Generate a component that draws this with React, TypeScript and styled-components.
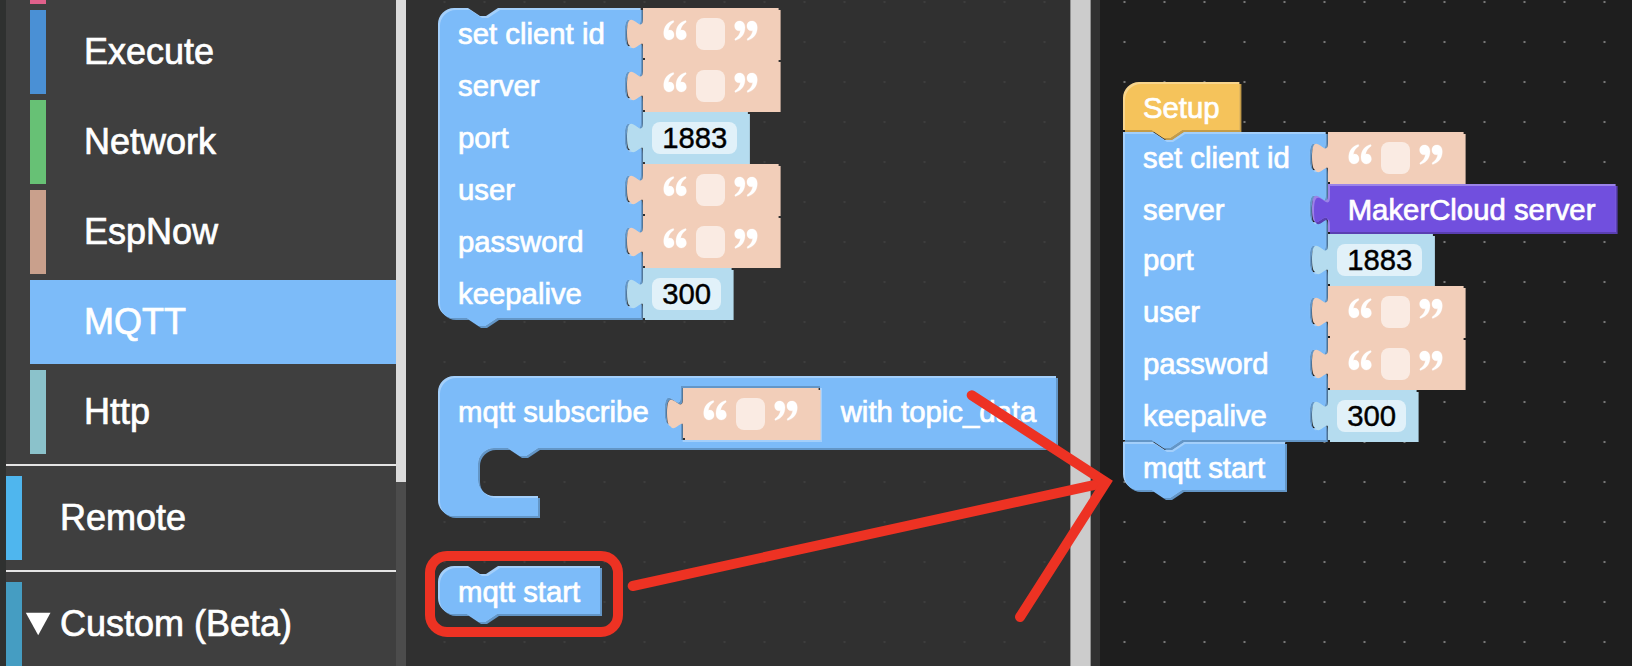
import React from 'react';
import styled, { createGlobalStyle } from 'styled-components';

const GlobalStyle = createGlobalStyle`
  * { box-sizing: border-box; }
  body { margin: 0; background: #1e1e1e; }
`;

type Tone = { fill: string; light: string; dark: string };

const MQTT: Tone = { fill: '#7cbbf9', light: '#a3cffb', dark: '#6396c7' };
const SETUP: Tone = { fill: '#f5c35b', light: '#f8d58c', dark: '#c49c49' };
const MAKER: Tone = { fill: '#714fde', light: '#9b83e8', dark: '#5a3fb2' };
const TEXT: Tone = { fill: '#f2ceb9', light: '#f2ceb9', dark: '#f2ceb9' };
const NUMBER: Tone = { fill: '#b5dcef', light: '#b5dcef', dark: '#b5dcef' };

const Editor = styled.div`
  display: flex;
  width: 1632px;
  height: 666px;
  overflow: hidden;
  position: relative;
  background: #1e1e1e;
  font-family: 'Liberation Sans', Arial, Helvetica, sans-serif;
  color: #fff;
`;

/* ---------- toolbox ---------- */

const Toolbox = styled.nav`
  flex: 0 0 396px;
  background: #3f3f3f;
  border-left: 6px solid #2f3130;
  height: 666px;
  overflow: hidden;
`;

const ToolboxBody = styled.div`
  display: flex;
  flex-direction: column;
  margin-top: -80px;
`;

const Category = styled.div<{ $color: string; $nested?: boolean; $selected?: boolean }>`
  display: flex;
  align-items: center;
  height: 84px;
  flex: none;
  margin: 0 0 6px ${p => (p.$nested ? 24 : 0)}px;
  border-left: 16px solid ${p => p.$color};
  background: ${p => (p.$selected ? p.$color : 'transparent')};
  font-size: 36px;
  line-height: 84px;
  white-space: pre;
  -webkit-text-stroke: 0.7px #fff;
`;

const Arrow = styled.svg`
  width: 26px;
  height: 24px;
  margin: 0 9px 0 3px;
`;

const CategoryName = styled.span<{ $indent?: number }>`
  padding-left: ${p => p.$indent ?? 38}px;
`;

const Separator = styled.hr`
  flex: none;
  width: 100%;
  height: 2px;
  margin: 4px 0 10px;
  border: 0;
  background: #e5e5e5;
`;

const ToolboxScroll = styled.div`
  flex: 0 0 10px;
  background: #4c4c4c;
`;

const ToolboxThumb = styled.div`
  height: 482px;
  background: #dbdbdb;
`;

/* ---------- canvases ---------- */

const dots = (color: string, x: number) => `
  background-image: radial-gradient(circle, ${color} 0 0.9px, transparent 1.6px);
  background-size: 40px 40px;
  background-position: ${x}px -18px;
`;

const Flyout = styled.section`
  position: relative;
  flex: 0 0 664px;
  background-color: #303030;
  ${dots('#3d3d3d', -381.5)}
`;

const FlyoutScroll = styled.div`
  flex: 0 0 30px;
  background: #303030;
`;

const FlyoutThumb = styled.div`
  width: 21px;
  height: 100%;
  background: #ccc;
  border: solid #8f8f8f;
  border-width: 0 1px;
`;

const Workspace = styled.section`
  position: relative;
  flex: 1;
  background-color: #1e1e1e;
  ${dots('#777', 4.5)}
`;

const Placed = styled.div<{ $x: number; $y: number }>`
  position: absolute;
  left: ${p => p.$x}px;
  top: ${p => p.$y}px;
`;

/* Later blocks come first in paint order so each notch overlaps the block below it. */
const Stack = styled.div`
  display: flex;
  flex-direction: column-reverse;
`;

/* ---------- blocks ---------- */

const BlockBox = styled.div<{ $w: number; $h: number }>`
  position: relative;
  width: ${p => p.$w}px;
  height: ${p => p.$h}px;
  flex: none;
`;

const ShapeSvg = styled.svg`
  position: absolute;
  left: 0;
  top: 0;
  width: 10px;
  height: 10px;
  overflow: visible;
`;

const Content = styled.div<{ $pad?: number }>`
  position: relative;
  display: flex;
  align-items: flex-start;
  padding: ${p => p.$pad ?? 0}px 0 0 20px;
`;

const Label = styled.span<{ $w?: number }>`
  flex: none;
  width: ${p => (p.$w ? `${p.$w}px` : 'auto')};
  font-size: 29.33px;
  line-height: 52px;
  height: 50px;
  white-space: pre;
  -webkit-text-stroke: 0.7px currentColor;
`;

const Rows = styled.div`
  position: relative;
`;

const Row = styled.div<{ $h: number }>`
  display: flex;
  height: ${p => p.$h}px;
  padding-left: 20px;
`;

const Field = styled.span<{ $w: number }>`
  flex: none;
  width: ${p => p.$w}px;
  height: 32px;
  margin-top: 10px;
  border-radius: 8px;
  background: rgba(255, 255, 255, 0.6);
  color: #000;
  font-size: 29.33px;
  line-height: 32px;
  text-align: center;
  -webkit-text-stroke: 0.4px #000;
`;

const QuoteSvg = styled.svg`
  flex: none;
  width: 24px;
  height: 24px;
  margin: 10px 9.4px 0;
`;

const TextContent = styled.div`
  position: relative;
  display: flex;
  padding-left: 10.6px;
`;

const NumberContent = styled.div`
  position: relative;
  padding-left: 9.5px;
  display: flex;
`;

const SubscribeInput = styled.div`
  margin: 2px 20px 0 0;
`;

function Shape({ d, tone }: { d: string; tone: Tone }) {
  const id = React.useId();
  return (
    <ShapeSvg>
      <defs>
        <clipPath id={id}>
          <path d={d} clipRule="evenodd" />
        </clipPath>
      </defs>
      <g transform="scale(2)" fillRule="evenodd">
        <path d={d} fill={tone.dark} transform="translate(1 1)" />
        <path d={d} fill={tone.light} />
        <g clipPath={`url(#${id})`}>
          <path d={d} fill={tone.fill} transform="translate(1 1)" />
        </g>
      </g>
    </ShapeSvg>
  );
}

const TAB_DOWN = 'v5 c0,10 -8,-8 -8,7.5 s8,-2.5 8,7.5';
const TAB_UP = 'V20 c0,-10 -8,8 -8,-7.5 s8,2.5 8,-7.5';

const valuePath = (w: number, h: number) => `M0,0 H${w} V${h} H0 ${TAB_UP} Z`;

function stackPath(
  w: number,
  h: number,
  o: { roundTop?: boolean; roundBottom?: boolean; notch?: boolean; tabs?: number[] },
) {
  const top = o.roundTop ? 'M0,8 A8,8 0 0,1 8,0' : 'M0,0';
  const notch = o.notch ? 'H15 l6,4 3,0 6,-4' : '';
  const tabs = (o.tabs ?? []).map(y => `V${y} ${TAB_DOWN}`).join(' ');
  const bottom = o.roundBottom ? 'H8 a8,8 0 0,1 -8,-8' : 'H0';
  return `${top} ${notch} H${w} ${tabs} V${h} H29.5 l-6,4 -3,0 -6,-4 ${bottom} Z`;
}

const CURL =
  'M10.4,2 C4.3,3.6 0.7,8.4 0.7,14.8 C0.7,18.9 2.9,21.4 6,21.4 C9,21.4 11.1,19.4 11.1,16.5 C11.1,13.6 9.3,11.6 6.8,11.6 C6.2,11.6 5.7,11.7 5.3,11.9 C5.7,8.6 7.7,5.4 11,3.4 Z';

function Quote({ flip }: { flip?: boolean }) {
  return (
    <QuoteSvg viewBox="0 0 24 24" fill="#fff" stroke="#fff" strokeOpacity="0.35" strokeWidth="0.8">
      <g transform={flip ? 'rotate(180 12 12.2)' : 'translate(0 0.5)'}>
        <path d={CURL} />
        <path d={CURL} transform="translate(12.3 0)" />
      </g>
    </QuoteSvg>
  );
}

function TextValue() {
  return (
    <BlockBox $w={138} $h={52}>
      <Shape d={valuePath(67.8, 25)} tone={TEXT} />
      <TextContent>
        <Quote />
        <Field $w={28.7} />
        <Quote flip />
      </TextContent>
    </BlockBox>
  );
}

function NumberValue({ value, width }: { value: string; width: number }) {
  return (
    <BlockBox $w={width + 21.7} $h={52}>
      <Shape d={valuePath((width + 19.7) / 2, 25)} tone={NUMBER} />
      <NumberContent>
        <Field $w={width}>{value}</Field>
      </NumberContent>
    </BlockBox>
  );
}

function ServerValue() {
  return (
    <BlockBox $w={290} $h={50}>
      <Shape d={valuePath(143.8, 24)} tone={MAKER} />
      <Content>
        <Label>MakerCloud server</Label>
      </Content>
    </BlockBox>
  );
}

function ClientBlock({ makerCloud }: { makerCloud?: boolean }) {
  const rows: [string, React.ReactNode, number][] = [
    ['set client id', <TextValue />, 52],
    ['server', makerCloud ? <ServerValue /> : <TextValue />, makerCloud ? 50 : 52],
    ['port', <NumberValue value="1883" width={85.2} />, 52],
    ['user', <TextValue />, 52],
    ['password', <TextValue />, 52],
    ['keepalive', <NumberValue value="300" width={68.9} />, 52],
  ];
  const total = rows.reduce((sum, r) => sum + r[2], 0);
  const tabs = rows.map((_, i) => rows.slice(0, i).reduce((sum, r) => sum + r[2], 0) / 2);
  const d = stackPath(101.35, total / 2 - 1, {
    roundTop: !makerCloud,
    roundBottom: !makerCloud,
    notch: true,
    tabs,
  });
  return (
    <BlockBox $w={204.7} $h={total}>
      <Shape d={d} tone={MQTT} />
      <Rows>
        {rows.map(([name, value, h]) => (
          <Row key={name} $h={h}>
            <Label $w={184.7}>{name}</Label>
            {value}
          </Row>
        ))}
      </Rows>
    </BlockBox>
  );
}

function StartBlock({ attached }: { attached?: boolean }) {
  return (
    <BlockBox $w={164} $h={50}>
      <Shape
        d={stackPath(81, 24, { roundTop: !attached, roundBottom: true, notch: true })}
        tone={MQTT}
      />
      <Content>
        <Label>mqtt start</Label>
      </Content>
    </BlockBox>
  );
}

function SetupBlock() {
  return (
    <BlockBox $w={118.7} $h={50}>
      <Shape d={stackPath(58.2, 24, { roundTop: true })} tone={SETUP} />
      <Content>
        <Label>Setup</Label>
      </Content>
    </BlockBox>
  );
}

const SUBSCRIBE_PATH =
  'M0,8 A8,8 0 0,1 8,0 H309 V36 H50 l-6,4 -3,0 -6,-4 H28 a8,8 0 0,0 -8,8 v8 a8,8 0 0,0 8,8 H50 V70 H8 a8,8 0 0,1 -8,-8 Z ' +
  `M121.35,5 ${TAB_DOWN} V32 H191 V5 Z`;

function SubscribeBlock() {
  return (
    <BlockBox $w={620} $h={142}>
      <Shape d={SUBSCRIBE_PATH} tone={MQTT} />
      <Content $pad={10}>
        <Label $w={224.7}>mqtt subscribe</Label>
        <SubscribeInput>
          <TextValue />
        </SubscribeInput>
        <Label>with topic_data</Label>
      </Content>
    </BlockBox>
  );
}

/* ---------- annotation ---------- */

const Annotation = styled.svg`
  position: absolute;
  left: 0;
  top: 0;
  width: 1632px;
  height: 666px;
  pointer-events: none;
`;

export default function App() {
  return (
    <Editor>
      <GlobalStyle />
      <Toolbox>
        <ToolboxBody>
          <Category $nested $color="#e0608a" />
          <Category $nested $color="#4a90d5">
            <CategoryName>Execute</CategoryName>
          </Category>
          <Category $nested $color="#67c175">
            <CategoryName>Network</CategoryName>
          </Category>
          <Category $nested $color="#c9a08c">
            <CategoryName>EspNow</CategoryName>
          </Category>
          <Category $nested $selected $color="#7cbbf9">
            <CategoryName>MQTT</CategoryName>
          </Category>
          <Category $nested $color="#8bc2cb">
            <CategoryName>Http</CategoryName>
          </Category>
          <Separator />
          <Category $color="#4fb6ee">
            <CategoryName>Remote</CategoryName>
          </Category>
          <Separator />
          <Category $color="#459dc2">
            <Arrow viewBox="0 0 26 24" fill="#fff" stroke="none">
              <path d="M0.8,0.7 H25.5 L13.2,23.3 Z" />
            </Arrow>
            <CategoryName $indent={0}>Custom (Beta)</CategoryName>
          </Category>
        </ToolboxBody>
      </Toolbox>
      <ToolboxScroll>
        <ToolboxThumb />
      </ToolboxScroll>
      <Flyout>
        <Placed $x={32} $y={8}>
          <ClientBlock />
        </Placed>
        <Placed $x={32} $y={376}>
          <SubscribeBlock />
        </Placed>
        <Placed $x={32} $y={566}>
          <StartBlock />
        </Placed>
      </Flyout>
      <FlyoutScroll>
        <FlyoutThumb />
      </FlyoutScroll>
      <Workspace>
        <Placed $x={23} $y={81.6}>
          <Stack>
            <StartBlock attached />
            <ClientBlock makerCloud />
            <SetupBlock />
          </Stack>
        </Placed>
      </Workspace>
      <Annotation viewBox="0 0 1632 666" fill="none" stroke="#ed3223" strokeWidth="10">
        <rect x="430" y="556" width="188" height="76" rx="17" />
        <path d="M632.7,586 L1104,482.8" strokeLinecap="round" />
        <path d="M971.7,395.3 L1106,482.3 L1020,617" strokeLinecap="round" strokeLinejoin="miter" />
      </Annotation>
    </Editor>
  );
}
